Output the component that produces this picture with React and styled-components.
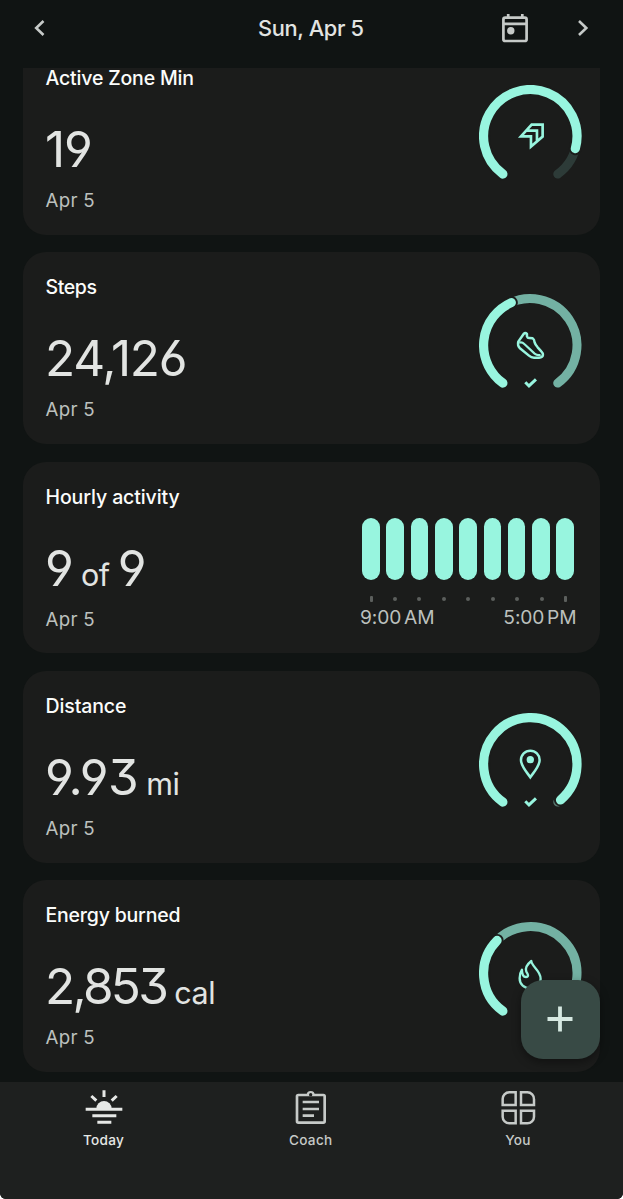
import React from "react";
import styled, { createGlobalStyle } from "styled-components";

const color = {
  page: "#101413",
  card: "#1b1c1b",
  nav: "#1e201f",
  mint: "#98f5df",
  mintDim: "#73b1a3",
  track: "#2d3b38",
  white: "#fbfcfb",
  text: "#e2e4e2",
  muted: "#bcc0be",
  icon: "#c6cac8",
};

const GlobalStyle = createGlobalStyle`
  html, body { margin: 0; background: #fff; }
  * { box-sizing: border-box; }
`;

const Screen = styled.div`
  position: relative;
  display: flex;
  flex-direction: column;
  width: 100%;
  height: 1199px;
  overflow: hidden;
  background: ${color.page};
  border-radius: 0 0 6px 6px;
  font-family: Inter, Roboto, "Liberation Sans", sans-serif;
  white-space: nowrap;
`;

const Header = styled.header`
  display: grid;
  grid-template-columns: 1fr auto 1fr;
  align-items: center;
  flex: none;
  height: 68px;
  padding: 0 34.5px 12px 33px;
`;

const HeaderDate = styled.h1`
  margin: 0;
  color: ${color.text};
  font-size: 21.8px;
  font-weight: 500;
  line-height: 28px;
  letter-spacing: -0.35px;
`;

const HeaderActions = styled.div`
  display: flex;
  align-items: center;
  justify-content: flex-end;
  gap: 48px;
`;

const IconButton = styled.button`
  display: flex;
  padding: 0;
  border: 0;
  background: none;
  color: ${color.icon};
  svg { display: block; }
`;

const List = styled.main`
  display: flex;
  flex: 1;
  flex-direction: column;
  gap: 17.6px;
  min-height: 0;
  padding: 0 23.5px 0 23px;
`;

/* $flush: the card that continues under the header, so its top edge is straight. */
const Card = styled.section`
  display: flex;
  justify-content: space-between;
  flex: none;
  height: ${(p) => (p.$flush ? 166.7 : 191.7)}px;
  padding: ${(p) => (p.$flush ? 1 : 26)}px 18px 0 22.5px;
  border-radius: ${(p) => (p.$flush ? "0 0 23px 23px" : "23px")};
  background: ${color.card};
`;

const Title = styled.h2`
  margin: 0;
  color: ${color.white};
  font-size: 19.5px;
  font-weight: 500;
  line-height: 18px;
  letter-spacing: ${(p) => p.$spacing}px;
`;

const Value = styled.div`
  height: 56px;
  margin-top: 34px;
  margin-left: -0.5px;
  color: ${color.text};
  font-size: 49.5px;
  font-weight: 400;
  line-height: 56px;
  font-feature-settings: "cv03", "cv04", "cv09";
  letter-spacing: ${(p) => p.$spacing}px;
`;

const Unit = styled.span`
  font-size: 30.5px;
  line-height: 1;
  letter-spacing: -0.5px;
`;

const CardDate = styled.div`
  margin-top: 12.2px;
  color: ${color.muted};
  font-size: 18.7px;
  line-height: 24px;
  letter-spacing: 0.3px;
`;

const GaugeSvg = styled.svg`
  display: block;
  width: 102.6px;
  height: 102.6px;
  margin-top: 16px;
`;

const Chart = styled.div`
  width: 216.5px;
  margin: 30px 5px 0 0;
`;

const Bars = styled.div`
  display: flex;
  justify-content: space-between;
  padding: 0 2.5px 0 2.2px;
`;

const Bar = styled.i`
  width: 17.5px;
  height: 62.7px;
  border-radius: 9px;
  background: ${color.mint};
`;

const Ticks = styled.div`
  display: flex;
  align-items: center;
  justify-content: space-between;
  height: 6px;
  margin-top: 16px;
  padding: 0 9.8px 0 10px;
`;

const Tick = styled.i`
  width: ${(p) => (p.$end ? 2.6 : 4)}px;
  height: ${(p) => (p.$end ? 5.6 : 4)}px;
  border-radius: ${(p) => (p.$end ? 1 : 2)}px;
  background: #5c5f5d;
`;

const ChartLabels = styled.div`
  display: flex;
  justify-content: space-between;
  margin-top: 2.4px;
  color: ${color.muted};
  font-size: 19.2px;
  line-height: 24px;
  letter-spacing: -0.1px;
  word-spacing: -2.5px;
`;

const Fab = styled.button`
  position: absolute;
  right: 23.5px;
  bottom: 140.3px;
  display: grid;
  place-items: center;
  width: 79px;
  height: 79px;
  padding: 0;
  border: 0;
  border-radius: 22px;
  background: #384a45;
  color: #d6e8e1;
  box-shadow: 0 3px 10px rgba(0, 0, 0, 0.4);
`;

const Nav = styled.nav`
  display: grid;
  grid-template-columns: repeat(3, 1fr);
  flex: none;
  height: 117.5px;
  padding: 7px 1.5px 0 0;
  background: ${color.nav};
`;

const NavItem = styled.a`
  display: flex;
  flex-direction: column;
  align-items: center;
  gap: 6.4px;
  color: ${(p) => (p.$active ? "#e6e8e6" : color.icon)};
  font-size: 13.6px;
  font-weight: 500;
  line-height: 18px;
  letter-spacing: 0.3px;
  svg { display: block; }
`;

const R = 46.7;
const START = 126;

function arc(from, to) {
  const point = (deg) => {
    const a = (deg * Math.PI) / 180;
    return `${(R * Math.cos(a)).toFixed(2)} ${(R * Math.sin(a)).toFixed(2)}`;
  };
  return `M${point(from)}A${R} ${R} 0 ${to - from > 180 ? 1 : 0} 1 ${point(to)}`;
}

/* Angles are in SVG degrees; the dial opens 36 degrees either side of the bottom. */
function Gauge({ end, track, done, children }) {
  const active = arc(START, end);
  return (
    <GaugeSvg viewBox="-51.3 -51.3 102.6 102.6" fill="none" strokeLinecap="round">
      <path d={arc(Math.max(START, end - 8), 414)} stroke={track} strokeWidth="9" />
      <path d={active} stroke={color.card} strokeWidth="13" />
      <path d={active} stroke={color.mint} strokeWidth="9.2" />
      <g stroke={color.mint} strokeWidth="7.5" strokeLinecap="butt" transform="scale(.3333)">
        {children}
        {done && <path d="M-15 111L-4 122L17 102" strokeWidth="9" />}
      </g>
    </GaugeSvg>
  );
}

const ZoneIcon = () => (
  <path d="M-28 0L4 -35H37V1L2 31V0ZM-12 -17H20V15" strokeWidth="8" />
);

const ShoeIcon = () => (
  <g strokeLinejoin="round">
    <path d="M-36 -11L-20 -34Q-15 -39 -10 -34V-27Q-8 -21 -2 -22L7 -21Q12 -18 13 -9Q15 -2 22 6L33 18Q38 23 38 29Q37 37 27 37H11Q3 37 -4 31L-32 8Q-39 1 -36 -11Z" />
    <path d="M-33 -8Q-25 -11 -18 -4L13 25Q20 31 31 29" strokeWidth="6.5" />
  </g>
);

const PinIcon = () => (
  <>
    <path d="M0 39C-10 24 -28 6 -28 -13A28 28 0 0 1 28 -13C28 6 10 24 0 39Z" />
    <circle cx="0" cy="-14" r="11" fill={color.mint} stroke="none" />
  </>
);

const FlameIcon = () => (
  <path
    d="M3 -37C4 -20 31 -9 31 16C31 36 17 45 0 45C-18 45 -32 34 -32 15C-32 4 -29 -5 -25 -11C-25 3 -21 11 -13 11C-3 11 -7 2 -12 -5C-17 -18 -7 -29 3 -37Z"
    strokeWidth="7"
    strokeLinejoin="round"
  />
);

const TodayIcon = () => (
  <svg width="38" height="36" viewBox="0 0 114 108" fill="none" stroke="currentColor" strokeWidth="9">
    <path d="M2 61H112M22 80H94M37 100H79M57 4V24M19 21L34 35M95 21L80 35" />
    <path d="M34 59a23 23 0 0 1 46 0z" fill="currentColor" stroke="none" />
  </svg>
);

const CoachIcon = () => (
  <svg width="38" height="36" viewBox="0 0 114 108" fill="none" stroke="currentColor" strokeWidth="8">
    <rect x="15" y="18" width="83" height="83" rx="4" />
    <path d="M32 39H81M32 60H81M32 80H66" />
    <path d="M44 18a12 12 0 0 1 24 0z" fill="currentColor" stroke="none" />
    <circle cx="56" cy="17" r="5" fill={color.nav} stroke="none" />
  </svg>
);

const YouIcon = () => (
  <svg width="38" height="36" viewBox="0 0 114 108" fill="none" stroke="currentColor" strokeWidth="7.5">
    <path d="M50 48H11V31A20 20 0 0 1 31 10H50Z" />
    <path d="M66 48H105V31A20 20 0 0 0 85 10H66Z" />
    <path d="M50 65H11V83A20 20 0 0 0 31 103H50Z" />
    <path d="M66 65H105V83A20 20 0 0 1 85 103H66Z" />
  </svg>
);

const Chevron = ({ flip }) => (
  <svg width="12" height="18" viewBox="0 0 12 18" fill="none" stroke="currentColor" strokeWidth="2.6">
    <path d={flip ? "M2 2L9.3 9L2 16" : "M10.5 2L3.2 9L10.5 16"} />
  </svg>
);

const CalendarIcon = () => (
  <svg width="27" height="30" viewBox="0 0 27 30" fill="none" stroke="currentColor" strokeWidth="2.7">
    <rect x="1.4" y="4.6" width="23.2" height="23.4" rx="1.8" />
    <path d="M1.4 10.8H24.6M6.2 1V4.5M20.3 1V4.5" />
    <circle cx="8.8" cy="17.8" r="3.7" fill="currentColor" stroke="none" />
  </svg>
);

function MetricCard({ title, spacing = 0, valueSpacing = 0, value, flush, children }) {
  return (
    <Card $flush={flush}>
      <div>
        <Title $spacing={spacing}>{title}</Title>
        <Value $spacing={valueSpacing}>{value}</Value>
        <CardDate>Apr 5</CardDate>
      </div>
      {children}
    </Card>
  );
}

export default function App() {
  return (
    <>
      <GlobalStyle />
      <Screen>
        <Header>
          <IconButton aria-label="Previous day"><Chevron /></IconButton>
          <HeaderDate>Sun, Apr 5</HeaderDate>
          <HeaderActions>
            <IconButton aria-label="Pick a date"><CalendarIcon /></IconButton>
            <IconButton aria-label="Next day"><Chevron flip /></IconButton>
          </HeaderActions>
        </Header>
        <List>
          <MetricCard flush title="Active Zone Min" spacing={-0.18} value="19" valueSpacing={-1.2}>
            <Gauge end={375.3} track={color.track}><ZoneIcon /></Gauge>
          </MetricCard>
          <MetricCard title="Steps" spacing={-0.4} value="24,126" valueSpacing={-1.25}>
            <Gauge end={246} track={color.mintDim} done><ShoeIcon /></Gauge>
          </MetricCard>
          <MetricCard title="Hourly activity" spacing={-0.1} value={<>9<Unit> of </Unit>9</>} valueSpacing={-0.8}>
            <Chart>
              <Bars>{Array.from({ length: 9 }, (_, i) => <Bar key={i} />)}</Bars>
              <Ticks>{Array.from({ length: 9 }, (_, i) => <Tick key={i} $end={i % 8 === 0} />)}</Ticks>
              <ChartLabels><span>9:00 AM</span><span>5:00 PM</span></ChartLabels>
            </Chart>
          </MetricCard>
          <MetricCard title="Distance" spacing={-0.12} value={<>9.93<Unit> mi</Unit></>} valueSpacing={-0.5}>
            <Gauge end={409.7} track="#56756d" done><PinIcon /></Gauge>
          </MetricCard>
          <MetricCard title="Energy burned" spacing={-0.2} value={<>2,853<Unit> cal</Unit></>} valueSpacing={-2.7}>
            <Gauge end={224.7} track={color.mintDim}><FlameIcon /></Gauge>
          </MetricCard>
        </List>
        <Nav>
          <NavItem $active><TodayIcon />Today</NavItem>
          <NavItem><CoachIcon />Coach</NavItem>
          <NavItem><YouIcon />You</NavItem>
        </Nav>
        <Fab aria-label="Add">
          <svg width="26" height="26" viewBox="0 0 26 26" stroke="currentColor" strokeWidth="3.8">
            <path d="M.5 13H25.5M13 .5V25.5" />
          </svg>
        </Fab>
      </Screen>
    </>
  );
}
